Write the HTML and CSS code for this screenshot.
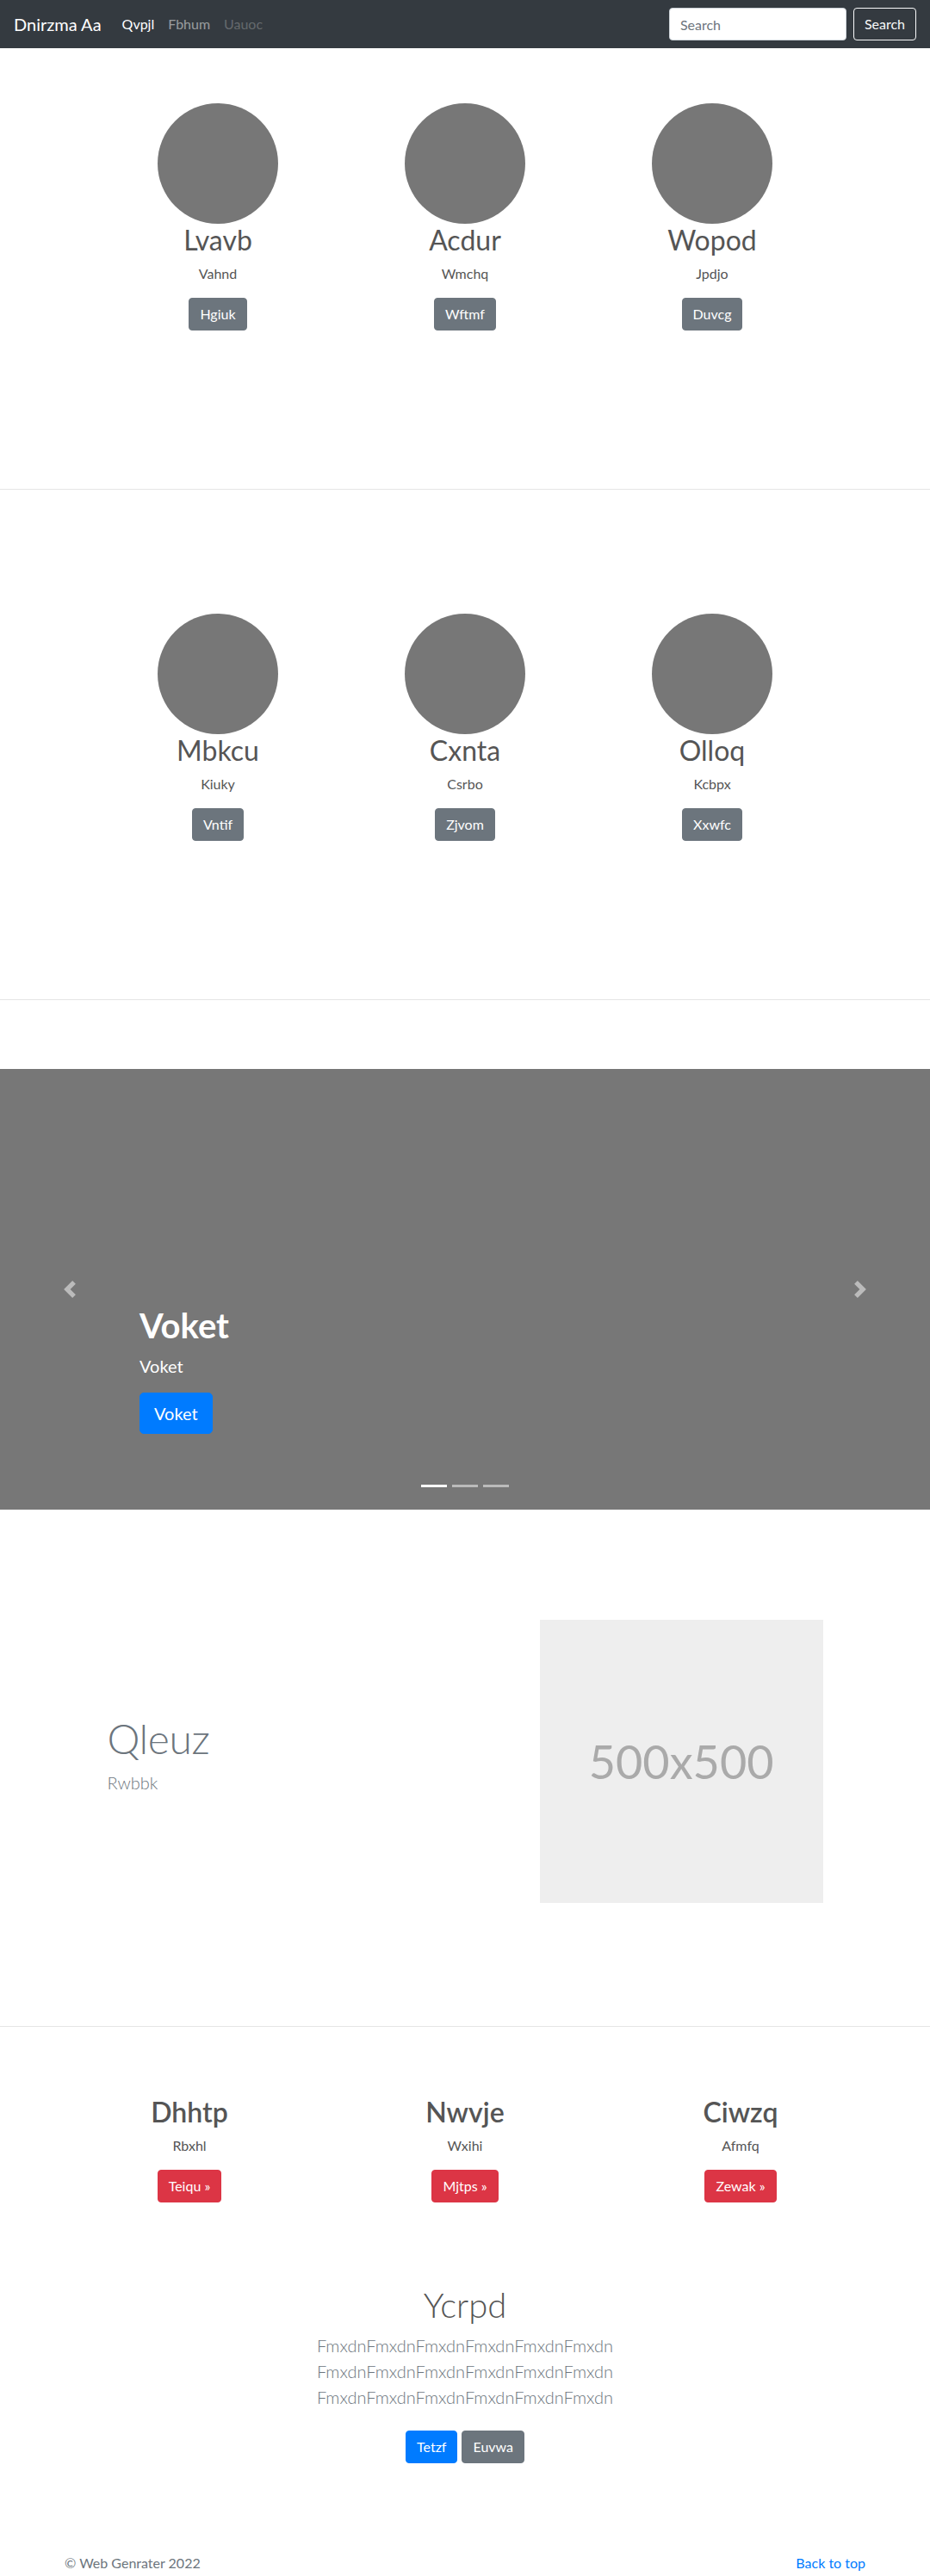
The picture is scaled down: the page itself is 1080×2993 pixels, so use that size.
FILE: index.html
```html
<!DOCTYPE html>
<html lang="en">
<head>
<meta charset="utf-8">
<title>Dnirzma Aa</title>
<link rel="stylesheet" href="styles.css">
</head>
<body>
<header class="navbar">
  <a class="brand" href="#">Dnirzma Aa</a>
  <nav class="nav-links">
    <a class="nav-link active" href="#">Qvpjl</a>
    <a class="nav-link" href="#">Fbhum</a>
    <a class="nav-link disabled" href="#">Uauoc</a>
  </nav>
  <form class="search">
    <input class="search-input" type="text" placeholder="Search">
    <button class="btn btn-outline-light" type="button">Search</button>
  </form>
</header>

<main>
  <section class="team team-first">
    <div class="team-grid">
      <div class="member">
        <div class="avatar"></div>
        <h2 class="member-name">Lvavb</h2>
        <p class="member-role">Vahnd</p>
        <a class="btn btn-secondary" href="#">Hgiuk</a>
      </div>
      <div class="member">
        <div class="avatar"></div>
        <h2 class="member-name">Acdur</h2>
        <p class="member-role">Wmchq</p>
        <a class="btn btn-secondary" href="#">Wftmf</a>
      </div>
      <div class="member">
        <div class="avatar"></div>
        <h2 class="member-name">Wopod</h2>
        <p class="member-role">Jpdjo</p>
        <a class="btn btn-secondary" href="#">Duvcg</a>
      </div>
    </div>
  </section>
  <hr class="divider">

  <section class="team team-second">
    <div class="team-grid">
      <div class="member">
        <div class="avatar"></div>
        <h2 class="member-name">Mbkcu</h2>
        <p class="member-role">Kiuky</p>
        <a class="btn btn-secondary" href="#">Vntif</a>
      </div>
      <div class="member">
        <div class="avatar"></div>
        <h2 class="member-name">Cxnta</h2>
        <p class="member-role">Csrbo</p>
        <a class="btn btn-secondary" href="#">Zjvom</a>
      </div>
      <div class="member">
        <div class="avatar"></div>
        <h2 class="member-name">Olloq</h2>
        <p class="member-role">Kcbpx</p>
        <a class="btn btn-secondary" href="#">Xxwfc</a>
      </div>
    </div>
  </section>
  <hr class="divider">

  <section class="carousel">
    <div class="caption">
      <h1 class="caption-title">Voket</h1>
      <p class="caption-text">Voket</p>
      <a class="btn btn-lg btn-primary" href="#">Voket</a>
    </div>
    <a class="carousel-control control-prev" href="#">
      <svg class="control-icon" viewBox="0 0 8 8" width="20" height="20"><path fill="#fff" d="M5.25 0l-4 4 4 4 1.5-1.5L4.25 4l2.5-2.5L5.25 0z"/></svg>
    </a>
    <a class="carousel-control control-next" href="#">
      <svg class="control-icon" viewBox="0 0 8 8" width="20" height="20"><path fill="#fff" d="M2.75 0l-1.5 1.5L3.75 4l-2.5 2.5L2.75 8l4-4-4-4z"/></svg>
    </a>
    <div class="indicators">
      <span class="indicator active"></span>
      <span class="indicator"></span>
      <span class="indicator"></span>
    </div>
  </section>

  <section class="featurette">
    <div class="featurette-text">
      <h2 class="featurette-heading">Qleuz</h2>
      <p class="featurette-lead">Rwbbk</p>
    </div>
    <div class="featurette-media">
      <div class="placeholder">500x500</div>
    </div>
  </section>
  <hr class="divider">

  <section class="marketing">
    <div class="feature">
      <h2 class="feature-title">Dhhtp</h2>
      <p class="feature-text">Rbxhl</p>
      <a class="btn btn-danger" href="#">Teiqu »</a>
    </div>
    <div class="feature">
      <h2 class="feature-title">Nwvje</h2>
      <p class="feature-text">Wxihi</p>
      <a class="btn btn-danger" href="#">Mjtps »</a>
    </div>
    <div class="feature">
      <h2 class="feature-title">Ciwzq</h2>
      <p class="feature-text">Afmfq</p>
      <a class="btn btn-danger" href="#">Zewak »</a>
    </div>
  </section>

  <section class="jumbo">
    <div class="jumbo-inner">
      <h1 class="jumbo-title">Ycrpd</h1>
      <p class="jumbo-lead">FmxdnFmxdnFmxdnFmxdnFmxdnFmxdn FmxdnFmxdnFmxdnFmxdnFmxdnFmxdn FmxdnFmxdnFmxdnFmxdnFmxdnFmxdn</p>
      <div class="jumbo-actions">
        <a class="btn btn-primary" href="#">Tetzf</a>
        <a class="btn btn-secondary" href="#">Euvwa</a>
      </div>
    </div>
  </section>
</main>

<footer class="footer">
  <p class="footer-copy">© Web Genrater 2022</p>
  <p class="footer-top"><a class="footer-link" href="#">Back to top</a></p>
</footer>
</body>
</html>
```

FILE: styles.css
```css
* { box-sizing: border-box; }

body {
  margin: 0;
  font-family: Lato, "Open Sans", "Liberation Sans", sans-serif;
  font-size: 16px;
  line-height: 1.5;
  color: #555;
  background: #fff;
}

/* Navbar */
.navbar {
  display: flex;
  align-items: center;
  height: 56px;
  padding: 0 16px;
  background: #343a40;
}
.brand {
  font-size: 20px;
  line-height: 30px;
  color: #fff;
  text-decoration: none;
  margin-right: 16px;
}
.nav-links {
  display: flex;
  flex: 1;
}
.nav-link {
  padding: 8px;
  color: rgba(255, 255, 255, 0.5);
  text-decoration: none;
}
.nav-link.active { color: #fff; }
.nav-link.disabled { color: rgba(255, 255, 255, 0.25); }

.search {
  display: flex;
  align-items: center;
  gap: 8px;
  margin: 0;
}
.search-input {
  width: 206px;
  height: 38px;
  padding: 6px 12px;
  font-family: inherit;
  font-size: 16px;
  color: #495057;
  background: #fff;
  border: 1px solid #ced4da;
  border-radius: 4px;
}
.search-input::placeholder { color: #6c757d; }

/* Buttons */
.btn {
  display: inline-block;
  padding: 6px 12px;
  font-family: inherit;
  font-size: 16px;
  line-height: 24px;
  font-weight: 400;
  color: #fff;
  text-decoration: none;
  border: 1px solid transparent;
  border-radius: 4px;
  background: transparent;
  cursor: pointer;
}
.btn-outline-light { color: #f8f9fa; border-color: #f8f9fa; }
.btn-secondary { background: #6c757d; border-color: #6c757d; }
.btn-primary { background: #007bff; border-color: #007bff; }
.btn-danger { background: #dc3545; border-color: #dc3545; }
.btn-lg {
  padding: 8px 16px;
  font-size: 20px;
  line-height: 30px;
  border-radius: 5px;
}

/* Team sections */
.team-first { padding: 64px 0 184px; }
.team-second { padding: 144px 0 184px; }
.team-grid {
  width: 861px;
  margin: 0 auto;
  display: grid;
  grid-template-columns: repeat(3, 1fr);
}
.member {
  display: flex;
  flex-direction: column;
  align-items: center;
  text-align: center;
}
.avatar {
  width: 140px;
  height: 140px;
  border-radius: 50%;
  background: #777;
}
.member-name {
  margin: 0 0 8px;
  font-size: 32px;
  line-height: 38px;
  font-weight: 400;
}
.member-role {
  margin: 0 0 16px;
}

.divider {
  margin: 0;
  border: 0;
  border-top: 1px solid #e5e5e5;
}

/* Carousel */
.carousel {
  position: relative;
  margin-top: 80px;
  height: 512px;
  background: #777;
  color: #fff;
  display: flex;
  align-items: flex-end;
  padding: 0 15% 88px;
}
.caption-title {
  margin: 0 0 8px;
  font-size: 40px;
  line-height: 48px;
  font-weight: 700;
}
.caption-text {
  margin: 0 0 16px;
  font-size: 20px;
  line-height: 30px;
}
.carousel-control {
  position: absolute;
  top: 0;
  bottom: 0;
  width: 15%;
  display: flex;
  align-items: center;
  justify-content: center;
  opacity: 0.5;
}
.control-prev { left: 0; }
.control-next { right: 0; }
.control-icon { display: block; }
.indicators {
  position: absolute;
  left: 0;
  right: 0;
  bottom: 26px;
  display: flex;
  justify-content: center;
  gap: 6px;
}
.indicator {
  width: 30px;
  height: 3px;
  background: rgba(255, 255, 255, 0.5);
}
.indicator.active { background: #fff; }

/* Featurette */
.featurette {
  width: 861px;
  margin: 0 auto;
  padding: 128px 0 143px;
  display: grid;
  grid-template-columns: 7fr 5fr;
  align-items: center;
}
.featurette-text,
.featurette-media { padding: 0 15px; }
.featurette-heading {
  margin: 0 0 8px;
  font-size: 48px;
  line-height: 1.2;
  font-weight: 300;
  letter-spacing: -0.4px;
  color: #6c757d;
}
.featurette-lead {
  margin: 0 0 16px;
  font-size: 20px;
  line-height: 30px;
  font-weight: 300;
  color: #6c757d;
}
.placeholder {
  height: 329px;
  background: #eee;
  color: #aaa;
  font-size: 54px;
  display: flex;
  align-items: center;
  justify-content: center;
}

/* Marketing */
.marketing {
  width: 960px;
  margin: 0 auto;
  padding-top: 80px;
  display: grid;
  grid-template-columns: repeat(3, 1fr);
  text-align: center;
}
.feature-title {
  margin: 0 0 8px;
  font-size: 32px;
  line-height: 38px;
  font-weight: 600;
}
.feature-text { margin: 0 0 16px; }

/* Jumbotron */
.jumbo {
  padding-top: 95px;
  text-align: center;
}
.jumbo-inner {
  width: 450px;
  margin: 0 auto;
}
.jumbo-title {
  margin: 0 0 8px;
  font-size: 40px;
  line-height: 48px;
  font-weight: 300;
}
.jumbo-lead {
  margin: 0 0 16px;
  font-size: 20px;
  line-height: 30px;
  font-weight: 300;
  color: #6c757d;
}
.jumbo-actions {
  display: flex;
  justify-content: center;
  gap: 5px;
  padding: 8px 0;
}

/* Footer */
.footer {
  width: 930px;
  margin: 0 auto;
  padding: 96px 0 48px;
  display: flex;
  justify-content: space-between;
  color: #6c757d;
}
.footer-copy,
.footer-top { margin: 0; }
.footer-link {
  color: #007bff;
  text-decoration: none;
}
```
